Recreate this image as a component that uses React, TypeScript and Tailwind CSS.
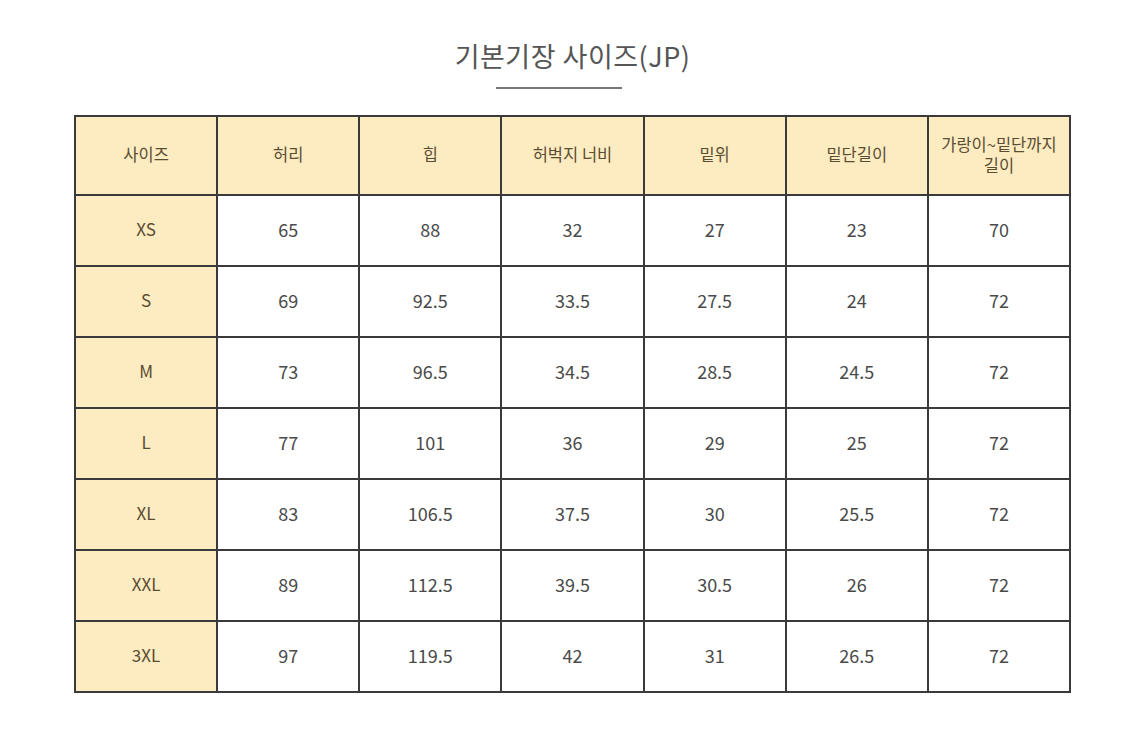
import React from "react";

const headers = ["사이즈", "허리", "힙", "허벅지 너비", "밑위", "밑단길이", "가랑이~밑단까지\n길이"];
const rows = [
  ["XS", "65", "88", "32", "27", "23", "70"],
  ["S", "69", "92.5", "33.5", "27.5", "24", "72"],
  ["M", "73", "96.5", "34.5", "28.5", "24.5", "72"],
  ["L", "77", "101", "36", "29", "25", "72"],
  ["XL", "83", "106.5", "37.5", "30", "25.5", "72"],
  ["XXL", "89", "112.5", "39.5", "30.5", "26", "72"],
  ["3XL", "97", "119.5", "42", "31", "26.5", "72"],
];

export default function App() {
  return (
    <div
      className="w-[1125px] h-[729px] bg-white overflow-hidden"
      style={{ fontFamily: '"Noto Sans CJK KR", "Noto Sans", sans-serif' }}
    >
      <div className="ml-[74px] w-[997px] flex flex-col items-center">
        <h1 className="mt-[36px] text-[27px] leading-[40px] text-[#555555] font-normal tracking-[0.5px]">
          기본기장 사이즈(JP)
        </h1>
        <div className="self-start ml-[422px] mt-[11px] w-[126px] h-[2px] bg-[#777777]" />
        <table className="mt-[26px] w-[997px] table-fixed border-collapse border-2 border-[#3a3a3a]">
          <thead>
            <tr className="h-[79px]">
              {headers.map((h, i) => (
                <th
                  key={i}
                  className="border-2 border-[#3a3a3a] bg-[#fdebc2] text-[#5b4d31] text-[16.5px] leading-[21px] font-normal whitespace-pre-line text-center align-middle px-1 pb-[2px]"
                >
                  {h}
                </th>
              ))}
            </tr>
          </thead>
          <tbody>
            {rows.map((r, ri) => (
              <tr key={ri} className="h-[71px]">
                {r.map((c, ci) => (
                  <td
                    key={ci}
                    className={
                      ci === 0
                        ? "border-2 border-[#3a3a3a] bg-[#fdebc2] text-[#5b4d31] text-[17px] text-center align-middle pb-[3px]"
                        : "border-2 border-[#3a3a3a] bg-white text-[#4a4a4a] text-[18px] text-center align-middle pb-[3px]"
                    }
                  >
                    {c}
                  </td>
                ))}
              </tr>
            ))}
          </tbody>
        </table>
      </div>
    </div>
  );
}
